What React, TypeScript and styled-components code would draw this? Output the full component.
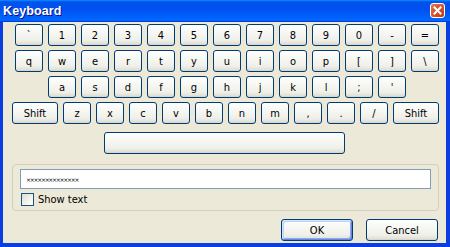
import { useState } from 'react';
import styled, { createGlobalStyle } from 'styled-components';

const GlobalStyle = createGlobalStyle`
  html, body {
    margin: 0;
    padding: 0;
    background: #ffffff;
  }
  #root {
    width: 450px;
    height: 247px;
  }
`;

const rows: { keys: string[]; indent: number }[] = [
  { keys: ['`', '1', '2', '3', '4', '5', '6', '7', '8', '9', '0', '-', '='], indent: 12 },
  { keys: ['q', 'w', 'e', 'r', 't', 'y', 'u', 'i', 'o', 'p', '[', ']', '\\'], indent: 12 },
  { keys: ['a', 's', 'd', 'f', 'g', 'h', 'j', 'k', 'l', ';', "'"], indent: 45 },
];

const bottomRow = ['z', 'x', 'c', 'v', 'b', 'n', 'm', ',', '.', '/'];

function App(): React.ReactElement {
  const [showText, setShowText] = useState(false);
  const value = 'password123456';

  return (
    <>
      <GlobalStyle />
      <Window>
        <TitleBar>
          <Title>Keyboard</Title>
          <CloseButton aria-label="Close">
            <svg width="9" height="9" viewBox="0 0 9 9">
              <path d="M1.5 1.5 L7.5 7.5 M7.5 1.5 L1.5 7.5" stroke="#fff" strokeWidth="2" strokeLinecap="square" />
            </svg>
          </CloseButton>
        </TitleBar>
        <Body>
          <Keys>
            {rows.map((row, i) => (
              <KeyRow key={i} $indent={row.indent}>
                {row.keys.map((k) => (
                  <Key key={k}>{k}</Key>
                ))}
              </KeyRow>
            ))}
            <KeyRow $indent={9}>
              <Key $wide>Shift</Key>
              {bottomRow.map((k) => (
                <Key key={k}>{k}</Key>
              ))}
              <Key $wide>Shift</Key>
            </KeyRow>
          </Keys>
          <SpaceRow>
            <SpaceBar />
          </SpaceRow>
          <Group>
            <TextBox>{showText ? value : '××××××××××××××'}</TextBox>
            <CheckRow onClick={() => setShowText(!showText)}>
              <CheckBox />
              <span>Show text</span>
            </CheckRow>
          </Group>
          <Buttons>
            <DialogButton $default>OK</DialogButton>
            <DialogButton>Cancel</DialogButton>
          </Buttons>
        </Body>
      </Window>
    </>
  );
}

export default App;

const Window = styled.div`
  width: 450px;
  height: 247px;
  display: flex;
  flex-direction: column;
  background: #0a3ee0;
  font-family: 'DejaVu Sans Condensed', 'Liberation Sans', sans-serif;
  font-size: 11px;
  color: #000;
  box-sizing: border-box;
`;

const TitleBar = styled.div`
  height: 22px;
  flex: none;
  display: flex;
  align-items: center;
  justify-content: space-between;
  padding: 0 5px 0 3px;
  background: linear-gradient(
    to bottom,
    #0997ff 0%,
    #0053ee 8%,
    #0050ee 40%,
    #0066ff 88%,
    #0066ff 93%,
    #005bff 95%,
    #003dd7 96%,
    #003dd7 100%
  );
`;

const Title = styled.span`
  font-family: 'Liberation Sans', 'DejaVu Sans', sans-serif;
  font-weight: 700;
  font-size: 12.5px;
  color: #fff;
  text-shadow: 1px 1px #0f1089;
  letter-spacing: 0.1px;
`;

const CloseButton = styled.div`
  width: 13px;
  height: 13px;
  border: 1px solid #fff;
  border-radius: 3px;
  display: flex;
  align-items: center;
  justify-content: center;
  background: radial-gradient(circle at 85% 85%, #c13d12 0%, #d9532a 55%, #e8785a 100%);
  margin-top: -1px;
`;

const Body = styled.div`
  flex: 1;
  display: flex;
  flex-direction: column;
  margin: 0 4px 4px 3px;
  padding-top: 2px;
  background: #ece9d8;
`;

const Keys = styled.div`
  display: flex;
  flex-direction: column;
  gap: 4px;
`;

const KeyRow = styled.div<{ $indent: number }>`
  display: flex;
  gap: 5px;
  padding-left: ${({ $indent }) => $indent}px;
`;

const buttonLook = `
  box-sizing: border-box;
  border: 1px solid #003c74;
  border-radius: 3px;
  background: linear-gradient(to bottom, #ffffff 0%, #f8f8f5 30%, #f0f0ea 75%, #e3e2d9 92%, #d6d0c5 100%);
  font-family: 'DejaVu Sans Condensed', 'Liberation Sans', sans-serif;
  font-size: 11px;
  color: #000;
  display: flex;
  align-items: center;
  justify-content: center;
  padding: 0;
`;

const Key = styled.div<{ $wide?: boolean }>`
  ${buttonLook}
  width: ${({ $wide }) => ($wide ? 46 : 28)}px;
  height: 22px;
`;

const SpaceRow = styled.div`
  display: flex;
  justify-content: center;
  margin-top: 8px;
`;

const SpaceBar = styled.div`
  ${buttonLook}
  width: 241px;
  height: 22px;
`;

const Group = styled.div`
  margin: 10px 7px 0 9px;
  height: 47px;
  box-sizing: border-box;
  border: 1px solid #d0d0bf;
  border-radius: 4px;
  padding: 4px 7px 0 7px;
  display: flex;
  flex-direction: column;
  gap: 4px;
`;

const TextBox = styled.div`
  height: 20px;
  box-sizing: border-box;
  border: 1px solid #7f9db9;
  background: #fff;
  color: #000;
  font-family: 'DejaVu Sans', sans-serif;
  font-size: 6px;
  letter-spacing: -1.3px;
  padding: 0 0 0 5px;
  display: flex;
  align-items: center;
`;

const CheckRow = styled.label`
  display: flex;
  align-items: center;
  gap: 4px;
  padding-left: 1px;
  height: 13px;
  cursor: default;
`;

const CheckBox = styled.span`
  width: 13px;
  height: 13px;
  box-sizing: border-box;
  border: 1px solid #1c5180;
  background: linear-gradient(135deg, #dcdcd7 0%, #f0f0ea 50%, #ffffff 100%);
`;

const Buttons = styled.div`
  display: flex;
  justify-content: flex-end;
  gap: 13px;
  margin: 8px 8px 0 0;
`;

const DialogButton = styled.div<{ $default?: boolean }>`
  ${buttonLook}
  width: 72px;
  height: 22px;
  box-shadow: ${({ $default }) =>
    $default ? 'inset 1px 1px 0 #cee7ff, inset -1px -1px 0 #6982ee, inset 2px 2px 0 #bcd4f6, inset -2px -2px 0 #89ade4' : 'none'};
`;
